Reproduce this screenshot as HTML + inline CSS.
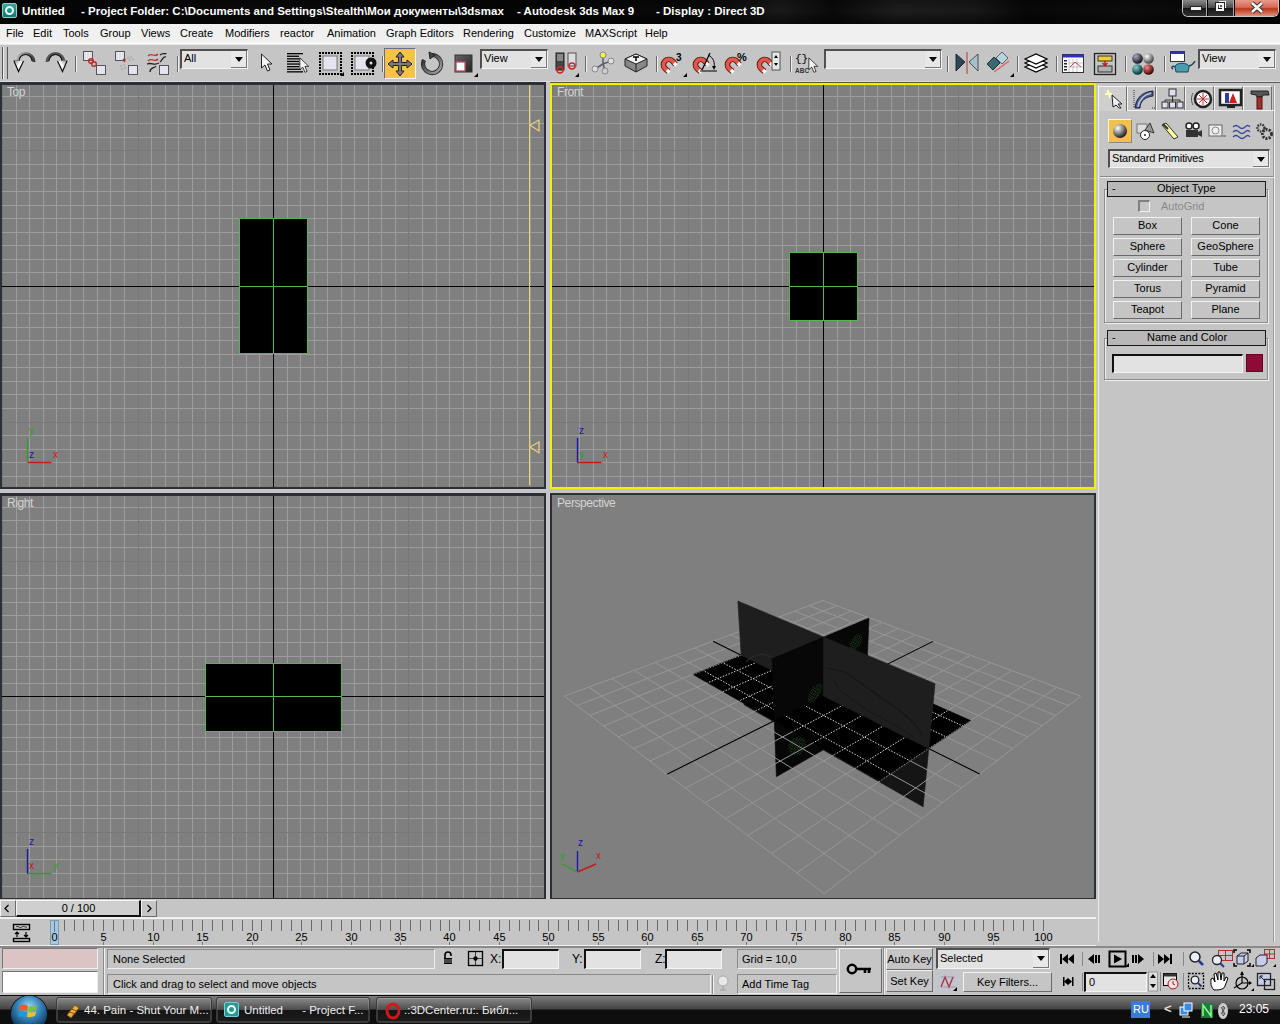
<!DOCTYPE html><html><head><meta charset="utf-8"><style>
*{margin:0;padding:0;box-sizing:border-box}
html,body{width:1280px;height:1024px;overflow:hidden;background:#c5c5c5;font-family:"Liberation Sans", sans-serif;}
.a{position:absolute}
path:not([fill]),polyline:not([fill]){fill:none}
.t{position:absolute;white-space:nowrap;font-size:11px;line-height:13px;color:#000}
.sunk{position:absolute;background:#e2e2e2;border-top:2px solid #505050;border-left:2px solid #505050;border-right:1px solid #f4f4f4;border-bottom:1px solid #f4f4f4}
.btn{position:absolute;background:#c5c5c5;border-top:1px solid #f2f2f2;border-left:1px solid #f2f2f2;border-right:1px solid #6a6a6a;border-bottom:1px solid #6a6a6a;font-size:11px;line-height:15px;text-align:center;white-space:nowrap;color:#000}
.pnl{position:absolute;background:#c5c5c5;border-top:1px solid #8a8a8a;border-left:1px solid #8a8a8a;border-right:1px solid #f0f0f0;border-bottom:1px solid #f0f0f0}
.sunkb{position:absolute;background:#e2e2e2;border-top:2px solid #111;border-left:2px solid #111;border-right:1px solid #f4f4f4;border-bottom:1px solid #f4f4f4}
.sep{position:absolute;width:2px;border-left:1px solid #8a8a8a;border-right:1px solid #f0f0f0}

</style></head><body>
<div class="a" style="left:0px;top:0px;width:1280px;height:24px;background:linear-gradient(95deg,#040404 0%,#0a0a0a 20%,#050505 40%,#0a0a0a 55%,#1a1a1a 61%,#0a0a0a 65%,#1e1e1e 70%,#191919 76%,#080808 80%,#0c0c0c 88%,#050505 100%)"></div>
<div class="a" style="left:0px;top:0px;width:1280px;height:24px;background:linear-gradient(rgba(0,0,0,.3),rgba(0,0,0,0) 45%,rgba(0,0,0,.6))"></div>
<div class="t" style="left:22px;top:4px;font-size:11.5px;font-weight:bold;color:#fff;line-height:14px">Untitled</div>
<div class="t" style="left:81px;top:4px;font-size:11.5px;font-weight:bold;color:#fff;line-height:14px">- Project Folder: C:\Documents and Settings\Stealth\Мои документы\3dsmax</div>
<div class="t" style="left:517px;top:4px;font-size:11.5px;font-weight:bold;color:#fff;line-height:14px">- Autodesk 3ds Max 9</div>
<div class="t" style="left:656px;top:4px;font-size:11.5px;font-weight:bold;color:#fff;line-height:14px">- Display : Direct 3D</div>
<div class="a" style="left:2px;top:3px;width:15px;height:15px;background:linear-gradient(#3aa89c,#17756c);border:1px solid #7fd6cc;border-radius:2px"></div>
<div class="a" style="left:5px;top:6px;width:9px;height:9px;border:2px solid #e8ffff;border-radius:50%"></div>
<div class="a" style="left:1182px;top:0px;width:97px;height:17px;border:1px solid #c8c8c8;border-top:none;border-radius:0 0 6px 6px;background:#000"></div>
<div class="a" style="left:1183px;top:0px;width:24px;height:16px;background:linear-gradient(#8a8a8a,#4a4a4a 48%,#151515 52%,#333);border-right:1px solid #aaa;border-radius:0 0 0 5px"></div>
<div class="a" style="left:1191px;top:7px;width:10px;height:3px;background:#f4f4f4;box-shadow:0 0 0 1px #222"></div>
<div class="a" style="left:1208px;top:0px;width:26px;height:16px;background:linear-gradient(#8a8a8a,#4a4a4a 48%,#151515 52%,#333);border-right:1px solid #aaa"></div>
<div class="a" style="left:1219px;top:1px;width:7px;height:7px;border:1px solid #eee"></div>
<div class="a" style="left:1216px;top:3px;width:8px;height:8px;border:2px solid #f4f4f4;box-shadow:0 0 0 1px #222"></div>
<div class="a" style="left:1235px;top:0px;width:43px;height:16px;background:linear-gradient(#e89a8a,#d86a58 45%,#b8381c 55%,#e0907e);border-radius:0 0 5px 0"></div>
<svg class="a" style="left:1249px;top:1px" width="16" height="13"><path d="M3 2 L13 11 M13 2 L3 11" stroke="#333" stroke-width="4.4"/><path d="M3 2 L13 11 M13 2 L3 11" stroke="#f4f4f4" stroke-width="2.6"/></svg>
<div class="a" style="left:0px;top:24px;width:1280px;height:18px;background:#f0f0f0"></div>
<div class="a" style="left:0px;top:42px;width:1280px;height:2px;background:#f8f8f8"></div>
<div class="t" style="left:6px;top:27px;">File</div>
<div class="t" style="left:33px;top:27px;">Edit</div>
<div class="t" style="left:63px;top:27px;">Tools</div>
<div class="t" style="left:100px;top:27px;">Group</div>
<div class="t" style="left:141px;top:27px;">Views</div>
<div class="t" style="left:180px;top:27px;">Create</div>
<div class="t" style="left:225px;top:27px;">Modifiers</div>
<div class="t" style="left:280px;top:27px;">reactor</div>
<div class="t" style="left:327px;top:27px;">Animation</div>
<div class="t" style="left:386px;top:27px;">Graph Editors</div>
<div class="t" style="left:463px;top:27px;">Rendering</div>
<div class="t" style="left:524px;top:27px;">Customize</div>
<div class="t" style="left:585px;top:27px;">MAXScript</div>
<div class="t" style="left:645px;top:27px;">Help</div>
<div class="a" style="left:0px;top:44px;width:1280px;height:37px;background:#c5c5c5;border-top:1px solid #e8e8e8"></div>
<div class="a" style="left:0px;top:81px;width:1280px;height:1px;background:#dcdce4"></div>
<div class="a" style="left:2px;top:47px;width:6px;height:32px;border-left:1px solid #555;border-right:1px solid #555;box-shadow:inset 1px 0 0 #f0f0f0"></div><svg class="a" style="left:12px;top:51px" width="25" height="22" viewBox="0 0 25 22"><defs><linearGradient id="ug" x1="0" y1="0" x2="1" y2="0"><stop offset="0" stop-color="#b8b8b8"/><stop offset=".6" stop-color="#7a7a7a"/><stop offset="1" stop-color="#2a2a2a"/></linearGradient><linearGradient id="ua" x1="0" y1="0" x2="1" y2="1"><stop offset="0" stop-color="#909090"/><stop offset=".5" stop-color="#fff"/><stop offset="1" stop-color="#bbb"/></linearGradient></defs><path d="M23.5 11 A10 10 0 0 0 3.5 11 L6.5 11 A7 7 0 0 1 20.5 11 Z" fill="url(#ug)"/><path d="M7 10 A6.5 6.5 0 0 1 20 10" stroke="#111" stroke-width="1.2" fill="none"/><path d="M1.5 9.5 L11.5 10 L6.5 20.5 Z" fill="url(#ua)"/><path d="M2 10 L6.5 20.5 L11.5 10" stroke="#111" stroke-width="1.2" fill="none"/><path d="M1.5 9.5 L6 9.7" stroke="#777" stroke-width="1"/></svg><svg class="a" style="left:44px;top:51px" width="25" height="22" viewBox="0 0 25 22"><g transform="translate(25,0) scale(-1,1)"><path d="M23.5 11 A10 10 0 0 0 3.5 11 L6.5 11 A7 7 0 0 1 20.5 11 Z" fill="#555"/><path d="M7 10 A6.5 6.5 0 0 1 20 10" stroke="#111" stroke-width="1.2" fill="none"/><path d="M1.5 9.5 L11.5 10 L6.5 20.5 Z" fill="url(#ua)"/><path d="M2 10 L6.5 20.5 L11.5 10" stroke="#111" stroke-width="1.2" fill="none"/><path d="M1.5 9.5 L6 9.7" stroke="#777" stroke-width="1"/></g></svg><div class="a" style="left:75px;top:56px;width:2px;height:16px;border-left:1px solid #6a6a6a;border-right:1px solid #f0f0f0"></div><svg class="a" style="left:82px;top:50px" width="25" height="26" viewBox="0 0 25 26"><rect x="1.5" y="1.5" width="9" height="9" fill="#e4e4f0" stroke="#555" stroke-width="1"/><rect x="14.5" y="15.5" width="9" height="9" fill="#e4e4f0" stroke="#555" stroke-width="1"/><circle cx="9" cy="11" r="2.3" fill="none" stroke="#c02828" stroke-width="1.4"/><circle cx="12" cy="14" r="2.3" fill="none" stroke="#c02828" stroke-width="1.4"/></svg><svg class="a" style="left:114px;top:50px" width="25" height="26" viewBox="0 0 25 26"><rect x="1.5" y="1.5" width="9" height="9" fill="#e4e4f0" stroke="#555" stroke-width="1"/><rect x="14.5" y="15.5" width="9" height="9" fill="#e4e4f0" stroke="#555" stroke-width="1"/><path d="M9 10 C11 8 12 10 10 12" stroke="#c02828" stroke-width="1.3" fill="none"/><g fill="#777"><circle cx="14" cy="8" r=".6"/><circle cx="17" cy="7" r=".6"/><circle cx="16" cy="10" r=".6"/><circle cx="19" cy="9" r=".6"/><circle cx="7" cy="16" r=".6"/><circle cx="10" cy="15" r=".6"/><circle cx="8" cy="19" r=".6"/><circle cx="11" cy="18" r=".6"/></g></svg><svg class="a" style="left:146px;top:50px" width="25" height="26" viewBox="0 0 25 26"><path d="M2 6 C5 2 9 8 12 4 M2 11 C5 7 9 13 12 9" stroke="#c02828" stroke-width="1.3" fill="none"/><path d="M1 14 C6 12 8 16 13 13 M14 5 C17 2 20 5 20 3 M14 12 C17 9 17 6 20 7 M4 22 C4 17 8 19 10 16" stroke="#222" stroke-width="1.3" fill="none"/><rect x="13.5" y="15.5" width="9" height="9" fill="#e4e4f0" stroke="#555" stroke-width="1"/></svg><div class="a" style="left:177px;top:56px;width:2px;height:16px;border-left:1px solid #6a6a6a;border-right:1px solid #f0f0f0"></div><div class="sunk" style="left:180px;top:49px;width:68px;height:20px"></div><div class="t" style="left:184px;top:52px">All</div><div class="a" style="left:231px;top:51px;width:16px;height:17px;background:#e8e8e8;border-right:1px solid #777;border-bottom:1px solid #777"></div><svg class="a" style="left:234px;top:56px" width="10" height="8"><path d="M1 1 L9 1 L5 6 Z" fill="#000"/></svg><svg class="a" style="left:259px;top:52px" width="16" height="22" viewBox="0 0 16 22"><path transform="translate(1.5,1) scale(1)" d="M1 1 L1 15 L4.5 12 L7 18 L9.5 17 L7 11 L11.5 11 Z" fill="#f4f4f4" stroke="#222" stroke-width="1"/></svg><svg class="a" style="left:286px;top:52px" width="24" height="23" viewBox="0 0 24 23"><g fill="#000"><rect x="1" y="1.0" width="16" height="1.3"/><rect x="1" y="3.6" width="12" height="1.3"/><rect x="1" y="6.2" width="14" height="1.3"/><rect x="1" y="8.8" width="12" height="1.3"/><rect x="1" y="11.4" width="14" height="1.3"/><rect x="1" y="14.0" width="12" height="1.3"/><rect x="1" y="16.6" width="14" height="1.3"/><rect x="1" y="19.2" width="16" height="1.3"/></g><path transform="translate(13,5) scale(0.85)" d="M1 1 L1 15 L4.5 12 L7 18 L9.5 17 L7 11 L11.5 11 Z" fill="#f4f4f4" stroke="#222" stroke-width="1"/></svg><svg class="a" style="left:318px;top:51px" width="26" height="25" viewBox="0 0 26 25"><rect x="1" y="1" width="2" height="2" fill="#000"/><rect x="1" y="22" width="2" height="2" fill="#000"/><rect x="4" y="1" width="2" height="2" fill="#000"/><rect x="4" y="22" width="2" height="2" fill="#000"/><rect x="7" y="1" width="2" height="2" fill="#000"/><rect x="7" y="22" width="2" height="2" fill="#000"/><rect x="10" y="1" width="2" height="2" fill="#000"/><rect x="10" y="22" width="2" height="2" fill="#000"/><rect x="13" y="1" width="2" height="2" fill="#000"/><rect x="13" y="22" width="2" height="2" fill="#000"/><rect x="16" y="1" width="2" height="2" fill="#000"/><rect x="16" y="22" width="2" height="2" fill="#000"/><rect x="19" y="1" width="2" height="2" fill="#000"/><rect x="19" y="22" width="2" height="2" fill="#000"/><rect x="22" y="1" width="2" height="2" fill="#000"/><rect x="22" y="22" width="2" height="2" fill="#000"/><rect x="1" y="4" width="2" height="2" fill="#000"/><rect x="22" y="4" width="2" height="2" fill="#000"/><rect x="1" y="7" width="2" height="2" fill="#000"/><rect x="22" y="7" width="2" height="2" fill="#000"/><rect x="1" y="10" width="2" height="2" fill="#000"/><rect x="22" y="10" width="2" height="2" fill="#000"/><rect x="1" y="13" width="2" height="2" fill="#000"/><rect x="22" y="13" width="2" height="2" fill="#000"/><rect x="1" y="16" width="2" height="2" fill="#000"/><rect x="22" y="16" width="2" height="2" fill="#000"/><rect x="1" y="19" width="2" height="2" fill="#000"/><rect x="22" y="19" width="2" height="2" fill="#000"/><rect x="1" y="22" width="2" height="2" fill="#000"/><rect x="22" y="22" width="2" height="2" fill="#000"/><rect x="5" y="5" width="14" height="14" fill="#e4e4ee" stroke="#777"/></svg><svg class="a" style="left:340px;top:72px" width="4" height="4"><path d="M4 0 L4 4 L0 4 Z" fill="#000"/></svg><svg class="a" style="left:350px;top:51px" width="27" height="25" viewBox="0 0 27 25"><rect x="1" y="1" width="2" height="2" fill="#000"/><rect x="1" y="22" width="2" height="2" fill="#000"/><rect x="4" y="1" width="2" height="2" fill="#000"/><rect x="4" y="22" width="2" height="2" fill="#000"/><rect x="7" y="1" width="2" height="2" fill="#000"/><rect x="7" y="22" width="2" height="2" fill="#000"/><rect x="10" y="1" width="2" height="2" fill="#000"/><rect x="10" y="22" width="2" height="2" fill="#000"/><rect x="13" y="1" width="2" height="2" fill="#000"/><rect x="13" y="22" width="2" height="2" fill="#000"/><rect x="16" y="1" width="2" height="2" fill="#000"/><rect x="16" y="22" width="2" height="2" fill="#000"/><rect x="19" y="1" width="2" height="2" fill="#000"/><rect x="19" y="22" width="2" height="2" fill="#000"/><rect x="22" y="1" width="2" height="2" fill="#000"/><rect x="22" y="22" width="2" height="2" fill="#000"/><rect x="1" y="4" width="2" height="2" fill="#000"/><rect x="22" y="4" width="2" height="2" fill="#000"/><rect x="1" y="7" width="2" height="2" fill="#000"/><rect x="22" y="7" width="2" height="2" fill="#000"/><rect x="1" y="10" width="2" height="2" fill="#000"/><rect x="22" y="10" width="2" height="2" fill="#000"/><rect x="1" y="13" width="2" height="2" fill="#000"/><rect x="22" y="13" width="2" height="2" fill="#000"/><rect x="1" y="16" width="2" height="2" fill="#000"/><rect x="22" y="16" width="2" height="2" fill="#000"/><rect x="1" y="19" width="2" height="2" fill="#000"/><rect x="22" y="19" width="2" height="2" fill="#000"/><rect x="1" y="22" width="2" height="2" fill="#000"/><rect x="22" y="22" width="2" height="2" fill="#000"/><rect x="5" y="5" width="14" height="14" fill="#e4e4ee" stroke="#777"/><circle cx="21" cy="12" r="5.5" fill="#111"/><circle cx="21" cy="12" r="1.5" fill="#ddd"/></svg><div class="a" style="left:382px;top:56px;width:2px;height:16px;border-left:1px solid #6a6a6a;border-right:1px solid #f0f0f0"></div><div class="a" style="left:384px;top:48px;width:32px;height:31px;background:#f5c446;border-top:1px solid #6a6a8a;border-left:1px solid #6a6a8a;border-right:1px solid #f8f8f8;border-bottom:1px solid #f8f8f8"></div><svg class="a" style="left:387px;top:51px" width="26" height="26" viewBox="0 0 26 26"><path d="M13 1 L17 6 L14.5 6 L14.5 11.5 L20 11.5 L20 9 L25 13 L20 17 L20 14.5 L14.5 14.5 L14.5 20 L17 20 L13 25 L9 20 L11.5 20 L11.5 14.5 L6 14.5 L6 17 L1 13 L6 9 L6 11.5 L11.5 11.5 L11.5 6 L9 6 Z" fill="#7a7a7a" stroke="#222" stroke-width="1"/></svg><svg class="a" style="left:420px;top:51px" width="25" height="25" viewBox="0 0 25 25"><defs><linearGradient id="rg" x1="0" y1="0" x2="1" y2="1"><stop offset="0" stop-color="#222"/><stop offset="1" stop-color="#aaa"/></linearGradient></defs><path d="M12 4 A9 9 0 1 1 4 9" fill="none" stroke="#222" stroke-width="4.2"/><path d="M12 4 A9 9 0 1 1 4 9" fill="none" stroke="url(#rg)" stroke-width="2.6"/><path d="M9 1 L15 4 L10 8 Z" fill="#444" stroke="#222"/></svg><svg class="a" style="left:453px;top:53px" width="22" height="22" viewBox="0 0 22 22"><defs><linearGradient id="sg" x1="0" y1="0" x2="1" y2="1"><stop offset="0" stop-color="#666"/><stop offset="1" stop-color="#222"/></linearGradient></defs><rect x="2" y="2" width="17" height="17" fill="url(#sg)" stroke="#333"/><rect x="3" y="9" width="9" height="9" fill="#fff" stroke="#c05060" stroke-width="1.3"/></svg><svg class="a" style="left:474px;top:73px" width="4" height="4"><path d="M4 0 L4 4 L0 4 Z" fill="#000"/></svg><div class="sunk" style="left:480px;top:49px;width:68px;height:20px"></div><div class="t" style="left:484px;top:52px">View</div><div class="a" style="left:531px;top:51px;width:16px;height:17px;background:#e8e8e8;border-right:1px solid #777;border-bottom:1px solid #777"></div><svg class="a" style="left:534px;top:56px" width="10" height="8"><path d="M1 1 L9 1 L5 6 Z" fill="#000"/></svg><svg class="a" style="left:554px;top:51px" width="26" height="24" viewBox="0 0 26 24"><rect x="2" y="2" width="8" height="17" fill="#444" stroke="#222"/><rect x="3" y="3" width="6" height="7" fill="#888"/><rect x="14" y="2" width="8" height="13" fill="#ddd" stroke="#555"/><circle cx="6" cy="19" r="3" fill="none" stroke="#d02828" stroke-width="1.5"/><circle cx="18" cy="15" r="3" fill="none" stroke="#d02828" stroke-width="1.5"/></svg><svg class="a" style="left:575px;top:73px" width="4" height="4"><path d="M4 0 L4 4 L0 4 Z" fill="#000"/></svg><div class="a" style="left:585px;top:56px;width:2px;height:16px;border-left:1px solid #6a6a6a;border-right:1px solid #f0f0f0"></div><svg class="a" style="left:591px;top:51px" width="24" height="24" viewBox="0 0 24 24"><path d="M12 5 L12 13 L4 18 M12 13 L20 10 M12 13 L14 20" stroke="#5a6070" stroke-width="1.6" fill="none"/><circle cx="12" cy="4" r="3" fill="#f0f050" stroke="#888"/><circle cx="4" cy="18" r="3" fill="#ddd" stroke="#888"/><circle cx="20" cy="10" r="3" fill="#ddd" stroke="#888"/><circle cx="14" cy="20" r="3" fill="#ccc" stroke="#888"/></svg><svg class="a" style="left:623px;top:51px" width="26" height="24" viewBox="0 0 26 24"><path d="M2 8 L13 3 L24 8 L24 15 L13 21 L2 15 Z" fill="#888" stroke="#222"/><path d="M2 8 L13 13 L24 8 L13 3 Z" fill="#f0f0f0" stroke="#222"/><path d="M13 13 L13 21" stroke="#222"/><path d="M10 6 L16 6 M13 6 L13 10" stroke="#000" stroke-width="1.5"/></svg><div class="a" style="left:656px;top:56px;width:2px;height:16px;border-left:1px solid #6a6a6a;border-right:1px solid #f0f0f0"></div><svg class="a" style="left:659px;top:51px" width="28" height="26" viewBox="0 0 28 26"><g transform="translate(-1,1)"><path d="M17.5 12.5 L14.5 9 A5.2 5.2 0 0 0 7 16.5 L10.5 19.5" fill="none" stroke="#5a1a14" stroke-width="5.6"/><path d="M17.5 12.5 L14.5 9 A5.2 5.2 0 0 0 7 16.5 L10.5 19.5" fill="none" stroke="#e0584a" stroke-width="3.8"/><path d="M16 11 L18.5 13.5 M9 18 L11.5 20.5" stroke="#fff" stroke-width="3.2"/></g><text x="17" y="10" font-family="Liberation Sans" font-weight="bold" font-size="10">3</text></svg><svg class="a" style="left:683px;top:73px" width="4" height="4"><path d="M4 0 L4 4 L0 4 Z" fill="#000"/></svg><svg class="a" style="left:691px;top:51px" width="28" height="26" viewBox="0 0 28 26"><g transform="translate(-1,1)"><path d="M17.5 12.5 L14.5 9 A5.2 5.2 0 0 0 7 16.5 L10.5 19.5" fill="none" stroke="#5a1a14" stroke-width="5.6"/><path d="M17.5 12.5 L14.5 9 A5.2 5.2 0 0 0 7 16.5 L10.5 19.5" fill="none" stroke="#e0584a" stroke-width="3.8"/><path d="M16 11 L18.5 13.5 M9 18 L11.5 20.5" stroke="#fff" stroke-width="3.2"/></g><path d="M9 20 L26 20 M11 19 L19 2" stroke="#000" stroke-width="1.2"/><path d="M17 4 C23 7 24 12 23 17" stroke="#000" fill="none"/><path d="M21 15 L23 19 L25 15 Z" fill="#000"/></svg><svg class="a" style="left:723px;top:51px" width="28" height="26" viewBox="0 0 28 26"><g transform="translate(-1,1)"><path d="M17.5 12.5 L14.5 9 A5.2 5.2 0 0 0 7 16.5 L10.5 19.5" fill="none" stroke="#5a1a14" stroke-width="5.6"/><path d="M17.5 12.5 L14.5 9 A5.2 5.2 0 0 0 7 16.5 L10.5 19.5" fill="none" stroke="#e0584a" stroke-width="3.8"/><path d="M16 11 L18.5 13.5 M9 18 L11.5 20.5" stroke="#fff" stroke-width="3.2"/></g><text x="14" y="10" font-family="Liberation Sans" font-weight="bold" font-size="11">%</text></svg><svg class="a" style="left:755px;top:51px" width="28" height="26" viewBox="0 0 28 26"><g transform="translate(-1,1)"><path d="M17.5 12.5 L14.5 9 A5.2 5.2 0 0 0 7 16.5 L10.5 19.5" fill="none" stroke="#5a1a14" stroke-width="5.6"/><path d="M17.5 12.5 L14.5 9 A5.2 5.2 0 0 0 7 16.5 L10.5 19.5" fill="none" stroke="#e0584a" stroke-width="3.8"/><path d="M16 11 L18.5 13.5 M9 18 L11.5 20.5" stroke="#fff" stroke-width="3.2"/></g><rect x="17" y="1" width="8" height="18" fill="#e8e8e8" stroke="#555"/><path d="M19 7 L21 4 L23 7 Z M19 12 L21 15 L23 12 Z" fill="#000"/></svg><div class="a" style="left:790px;top:56px;width:2px;height:16px;border-left:1px solid #6a6a6a;border-right:1px solid #f0f0f0"></div><svg class="a" style="left:794px;top:51px" width="28" height="26" viewBox="0 0 28 26"><text x="1" y="11" font-family="Liberation Mono" font-size="11">{}</text><text x="1" y="22" font-family="Liberation Sans" font-weight="bold" font-size="6.5" fill="#333">ABC</text><path transform="translate(14,6) scale(0.85)" d="M1 1 L1 15 L4.5 12 L7 18 L9.5 17 L7 11 L11.5 11 Z" fill="#f4f4f4" stroke="#222" stroke-width="1"/></svg><div class="sunk" style="left:824px;top:49px;width:118px;height:20px"></div><div class="a" style="left:925px;top:51px;width:16px;height:17px;background:#e8e8e8;border-right:1px solid #777;border-bottom:1px solid #777"></div><svg class="a" style="left:928px;top:56px" width="10" height="8"><path d="M1 1 L9 1 L5 6 Z" fill="#000"/></svg><div class="a" style="left:947px;top:56px;width:2px;height:16px;border-left:1px solid #6a6a6a;border-right:1px solid #f0f0f0"></div><svg class="a" style="left:954px;top:51px" width="26" height="24" viewBox="0 0 26 24"><path d="M2 3 L11 11 L2 20 Z" fill="#2a4a5a" stroke="#111" stroke-width=".8"/><path d="M24 3 L15 11 L24 20 Z" fill="#a8c0cc" stroke="#333" stroke-width=".8"/><path d="M13 1 L13 23" stroke="#c06060" stroke-width="1.5"/></svg><svg class="a" style="left:985px;top:51px" width="26" height="26" viewBox="0 0 26 26"><path d="M2 13 L9 6 L15 12 L8 19 Z" fill="#3a6a70" stroke="#111" stroke-width=".8"/><path d="M11 7 L17 1 L23 7 L17 13 Z" fill="#b8d4e0" stroke="#444" stroke-width=".8"/><path d="M9 21 L24 10" stroke="#e06060" stroke-width="1.3"/></svg><svg class="a" style="left:1010px;top:73px" width="4" height="4"><path d="M4 0 L4 4 L0 4 Z" fill="#000"/></svg><div class="a" style="left:1017px;top:56px;width:2px;height:16px;border-left:1px solid #6a6a6a;border-right:1px solid #f0f0f0"></div><svg class="a" style="left:1023px;top:53px" width="26" height="22" viewBox="0 0 26 22"><path d="M2 14 L13 9 L24 14 L13 19 Z" fill="#fff" stroke="#000" stroke-width="1.2"/><path d="M2 10 L13 5 L24 10 L13 15 Z" fill="#fff" stroke="#000" stroke-width="1.2"/><path d="M2 6 L13 1 L24 6 L13 11 Z" fill="#fff" stroke="#000" stroke-width="1.2"/></svg><div class="a" style="left:1056px;top:56px;width:2px;height:16px;border-left:1px solid #6a6a6a;border-right:1px solid #f0f0f0"></div><svg class="a" style="left:1061px;top:53px" width="25" height="22" viewBox="0 0 25 22"><rect x="1.5" y="1.5" width="21" height="18" fill="#fff" stroke="#333"/><rect x="1.5" y="1.5" width="21" height="3" fill="#3030c0"/><rect x="3" y="7" width="3" height="1.5" fill="#223"/><rect x="3" y="10" width="3" height="1.5" fill="#223"/><rect x="3" y="13" width="3" height="1.5" fill="#223"/><rect x="3" y="16" width="3" height="1.5" fill="#223"/><path d="M8 6 L8 19 M12 6 L12 19 M16 6 L16 19 M8 10 L22 10 M8 14 L22 14" stroke="#99a" stroke-width=".6"/><path d="M9 14 L14 9 L20 14" stroke="#d04040" fill="none"/></svg><svg class="a" style="left:1093px;top:52px" width="25" height="24" viewBox="0 0 25 24"><rect x="1.5" y="1.5" width="21" height="21" fill="#c5c5c5" stroke="#222" stroke-width="1.3"/><rect x="5" y="4" width="14" height="5" fill="#f0d030" stroke="#333"/><rect x="5" y="14" width="14" height="6" fill="#b0b0b0" stroke="#333"/><path d="M12 9 L12 13 M9.5 11 L12 13.5 L14.5 11" stroke="#c02020" stroke-width="1.5" fill="none"/></svg><div class="a" style="left:1125px;top:56px;width:2px;height:16px;border-left:1px solid #6a6a6a;border-right:1px solid #f0f0f0"></div><svg class="a" style="left:1131px;top:52px" width="25" height="24" viewBox="0 0 25 24"><defs><radialGradient id="m1" cx="35%" cy="30%" r="70%"><stop offset="0" stop-color="#aab"/><stop offset="1" stop-color="#112"/></radialGradient><radialGradient id="m2" cx="35%" cy="30%" r="70%"><stop offset="0" stop-color="#fff"/><stop offset="1" stop-color="#444"/></radialGradient><radialGradient id="m3" cx="35%" cy="30%" r="70%"><stop offset="0" stop-color="#8cc"/><stop offset="1" stop-color="#033"/></radialGradient><radialGradient id="m4" cx="35%" cy="30%" r="70%"><stop offset="0" stop-color="#e88"/><stop offset="1" stop-color="#400"/></radialGradient></defs><circle cx="6.5" cy="6.5" r="5.3" fill="url(#m1)"/><circle cx="17.5" cy="6.5" r="5.3" fill="url(#m2)"/><circle cx="6.5" cy="17.5" r="5.3" fill="url(#m3)"/><circle cx="17.5" cy="17.5" r="5.3" fill="url(#m4)"/></svg><div class="a" style="left:1164px;top:56px;width:2px;height:16px;border-left:1px solid #6a6a6a;border-right:1px solid #f0f0f0"></div><svg class="a" style="left:1169px;top:50px" width="27" height="26" viewBox="0 0 27 26"><rect x="1.5" y="1.5" width="14" height="10" fill="#fff" stroke="#333"/><rect x="1.5" y="1.5" width="14" height="2.5" fill="#3030c0"/><path d="M6 17 C6 12 20 12 20 17 L19 22 L7 22 Z" fill="#4a9ab0" stroke="#1a4a5a"/><path d="M20 16 C24 15 25 13 26 11" stroke="#1a4a5a" fill="none" stroke-width="1.5"/><path d="M6 17 C3 15 2 18 4 19" stroke="#1a4a5a" fill="none" stroke-width="1.5"/></svg><div class="sunk" style="left:1198px;top:49px;width:78px;height:20px"></div><div class="t" style="left:1202px;top:52px">View</div><div class="a" style="left:1259px;top:51px;width:16px;height:17px;background:#e8e8e8;border-right:1px solid #777;border-bottom:1px solid #777"></div><svg class="a" style="left:1262px;top:56px" width="10" height="8"><path d="M1 1 L9 1 L5 6 Z" fill="#000"/></svg>
<div class="a" style="left:0px;top:82px;width:546px;height:407px;background:#2b2f36"></div>
<svg class="a" style="left:2px;top:85px" width="542" height="402" viewBox="0 0 542 402" shape-rendering="crispEdges"><rect width="542" height="402" fill="#7f7f7f"/><rect x="0" y="0" width="1" height="402" fill="#787878"/><rect x="14" y="0" width="1" height="402" fill="#9c9c9c"/><rect x="27" y="0" width="1" height="402" fill="#9c9c9c"/><rect x="41" y="0" width="1" height="402" fill="#9c9c9c"/><rect x="54" y="0" width="1" height="402" fill="#9c9c9c"/><rect x="68" y="0" width="1" height="402" fill="#9c9c9c"/><rect x="81" y="0" width="1" height="402" fill="#9c9c9c"/><rect x="0" y="11" width="542" height="1" fill="#9c9c9c"/><rect x="95" y="0" width="1" height="402" fill="#9c9c9c"/><rect x="0" y="25" width="542" height="1" fill="#9c9c9c"/><rect x="108" y="0" width="1" height="402" fill="#9c9c9c"/><rect x="0" y="38" width="542" height="1" fill="#9c9c9c"/><rect x="122" y="0" width="1" height="402" fill="#9c9c9c"/><rect x="0" y="52" width="542" height="1" fill="#9c9c9c"/><rect x="136" y="0" width="1" height="402" fill="#787878"/><rect x="0" y="65" width="542" height="1" fill="#787878"/><rect x="149" y="0" width="1" height="402" fill="#9c9c9c"/><rect x="0" y="79" width="542" height="1" fill="#9c9c9c"/><rect x="163" y="0" width="1" height="402" fill="#9c9c9c"/><rect x="0" y="93" width="542" height="1" fill="#9c9c9c"/><rect x="176" y="0" width="1" height="402" fill="#9c9c9c"/><rect x="0" y="106" width="542" height="1" fill="#9c9c9c"/><rect x="190" y="0" width="1" height="402" fill="#9c9c9c"/><rect x="0" y="120" width="542" height="1" fill="#9c9c9c"/><rect x="203" y="0" width="1" height="402" fill="#9c9c9c"/><rect x="0" y="133" width="542" height="1" fill="#9c9c9c"/><rect x="217" y="0" width="1" height="402" fill="#9c9c9c"/><rect x="0" y="147" width="542" height="1" fill="#9c9c9c"/><rect x="230" y="0" width="1" height="402" fill="#9c9c9c"/><rect x="0" y="160" width="542" height="1" fill="#9c9c9c"/><rect x="244" y="0" width="1" height="402" fill="#9c9c9c"/><rect x="0" y="174" width="542" height="1" fill="#9c9c9c"/><rect x="257" y="0" width="1" height="402" fill="#9c9c9c"/><rect x="0" y="187" width="542" height="1" fill="#9c9c9c"/><rect x="285" y="0" width="1" height="402" fill="#9c9c9c"/><rect x="0" y="215" width="542" height="1" fill="#9c9c9c"/><rect x="298" y="0" width="1" height="402" fill="#9c9c9c"/><rect x="0" y="228" width="542" height="1" fill="#9c9c9c"/><rect x="312" y="0" width="1" height="402" fill="#9c9c9c"/><rect x="0" y="242" width="542" height="1" fill="#9c9c9c"/><rect x="325" y="0" width="1" height="402" fill="#9c9c9c"/><rect x="0" y="255" width="542" height="1" fill="#9c9c9c"/><rect x="339" y="0" width="1" height="402" fill="#9c9c9c"/><rect x="0" y="269" width="542" height="1" fill="#9c9c9c"/><rect x="352" y="0" width="1" height="402" fill="#9c9c9c"/><rect x="0" y="282" width="542" height="1" fill="#9c9c9c"/><rect x="366" y="0" width="1" height="402" fill="#9c9c9c"/><rect x="0" y="296" width="542" height="1" fill="#9c9c9c"/><rect x="379" y="0" width="1" height="402" fill="#9c9c9c"/><rect x="0" y="309" width="542" height="1" fill="#9c9c9c"/><rect x="393" y="0" width="1" height="402" fill="#9c9c9c"/><rect x="0" y="323" width="542" height="1" fill="#9c9c9c"/><rect x="406" y="0" width="1" height="402" fill="#787878"/><rect x="0" y="337" width="542" height="1" fill="#787878"/><rect x="420" y="0" width="1" height="402" fill="#9c9c9c"/><rect x="0" y="350" width="542" height="1" fill="#9c9c9c"/><rect x="434" y="0" width="1" height="402" fill="#9c9c9c"/><rect x="0" y="364" width="542" height="1" fill="#9c9c9c"/><rect x="447" y="0" width="1" height="402" fill="#9c9c9c"/><rect x="0" y="377" width="542" height="1" fill="#9c9c9c"/><rect x="461" y="0" width="1" height="402" fill="#9c9c9c"/><rect x="0" y="391" width="542" height="1" fill="#9c9c9c"/><rect x="474" y="0" width="1" height="402" fill="#9c9c9c"/><rect x="488" y="0" width="1" height="402" fill="#9c9c9c"/><rect x="501" y="0" width="1" height="402" fill="#9c9c9c"/><rect x="515" y="0" width="1" height="402" fill="#9c9c9c"/><rect x="528" y="0" width="1" height="402" fill="#9c9c9c"/><rect x="271" y="0" width="1" height="402" fill="#000"/><rect x="0" y="201" width="542" height="1" fill="#000"/><rect x="237" y="133" width="69" height="136" fill="#50b84c"/><rect x="238" y="134" width="67" height="134" fill="#000"/><rect x="271" y="133" width="1" height="136" fill="#50b84c"/><rect x="237" y="201" width="69" height="1" fill="#50b84c"/></svg>
<div class="t" style="left:7px;top:86px;color:#d4d4d4;font-size:12px;letter-spacing:-0.4px">Top</div>
<div class="a" style="left:550px;top:82px;width:546px;height:407px;background:#2b2f36"></div>
<svg class="a" style="left:552px;top:85px" width="542" height="402" viewBox="0 0 542 402" shape-rendering="crispEdges"><rect width="542" height="402" fill="#7f7f7f"/><rect x="0" y="0" width="1" height="402" fill="#787878"/><rect x="14" y="0" width="1" height="402" fill="#9c9c9c"/><rect x="27" y="0" width="1" height="402" fill="#9c9c9c"/><rect x="41" y="0" width="1" height="402" fill="#9c9c9c"/><rect x="54" y="0" width="1" height="402" fill="#9c9c9c"/><rect x="68" y="0" width="1" height="402" fill="#9c9c9c"/><rect x="81" y="0" width="1" height="402" fill="#9c9c9c"/><rect x="0" y="11" width="542" height="1" fill="#9c9c9c"/><rect x="95" y="0" width="1" height="402" fill="#9c9c9c"/><rect x="0" y="25" width="542" height="1" fill="#9c9c9c"/><rect x="108" y="0" width="1" height="402" fill="#9c9c9c"/><rect x="0" y="38" width="542" height="1" fill="#9c9c9c"/><rect x="122" y="0" width="1" height="402" fill="#9c9c9c"/><rect x="0" y="52" width="542" height="1" fill="#9c9c9c"/><rect x="136" y="0" width="1" height="402" fill="#787878"/><rect x="0" y="65" width="542" height="1" fill="#787878"/><rect x="149" y="0" width="1" height="402" fill="#9c9c9c"/><rect x="0" y="79" width="542" height="1" fill="#9c9c9c"/><rect x="163" y="0" width="1" height="402" fill="#9c9c9c"/><rect x="0" y="93" width="542" height="1" fill="#9c9c9c"/><rect x="176" y="0" width="1" height="402" fill="#9c9c9c"/><rect x="0" y="106" width="542" height="1" fill="#9c9c9c"/><rect x="190" y="0" width="1" height="402" fill="#9c9c9c"/><rect x="0" y="120" width="542" height="1" fill="#9c9c9c"/><rect x="203" y="0" width="1" height="402" fill="#9c9c9c"/><rect x="0" y="133" width="542" height="1" fill="#9c9c9c"/><rect x="217" y="0" width="1" height="402" fill="#9c9c9c"/><rect x="0" y="147" width="542" height="1" fill="#9c9c9c"/><rect x="230" y="0" width="1" height="402" fill="#9c9c9c"/><rect x="0" y="160" width="542" height="1" fill="#9c9c9c"/><rect x="244" y="0" width="1" height="402" fill="#9c9c9c"/><rect x="0" y="174" width="542" height="1" fill="#9c9c9c"/><rect x="257" y="0" width="1" height="402" fill="#9c9c9c"/><rect x="0" y="187" width="542" height="1" fill="#9c9c9c"/><rect x="285" y="0" width="1" height="402" fill="#9c9c9c"/><rect x="0" y="215" width="542" height="1" fill="#9c9c9c"/><rect x="298" y="0" width="1" height="402" fill="#9c9c9c"/><rect x="0" y="228" width="542" height="1" fill="#9c9c9c"/><rect x="312" y="0" width="1" height="402" fill="#9c9c9c"/><rect x="0" y="242" width="542" height="1" fill="#9c9c9c"/><rect x="325" y="0" width="1" height="402" fill="#9c9c9c"/><rect x="0" y="255" width="542" height="1" fill="#9c9c9c"/><rect x="339" y="0" width="1" height="402" fill="#9c9c9c"/><rect x="0" y="269" width="542" height="1" fill="#9c9c9c"/><rect x="352" y="0" width="1" height="402" fill="#9c9c9c"/><rect x="0" y="282" width="542" height="1" fill="#9c9c9c"/><rect x="366" y="0" width="1" height="402" fill="#9c9c9c"/><rect x="0" y="296" width="542" height="1" fill="#9c9c9c"/><rect x="379" y="0" width="1" height="402" fill="#9c9c9c"/><rect x="0" y="309" width="542" height="1" fill="#9c9c9c"/><rect x="393" y="0" width="1" height="402" fill="#9c9c9c"/><rect x="0" y="323" width="542" height="1" fill="#9c9c9c"/><rect x="406" y="0" width="1" height="402" fill="#787878"/><rect x="0" y="337" width="542" height="1" fill="#787878"/><rect x="420" y="0" width="1" height="402" fill="#9c9c9c"/><rect x="0" y="350" width="542" height="1" fill="#9c9c9c"/><rect x="434" y="0" width="1" height="402" fill="#9c9c9c"/><rect x="0" y="364" width="542" height="1" fill="#9c9c9c"/><rect x="447" y="0" width="1" height="402" fill="#9c9c9c"/><rect x="0" y="377" width="542" height="1" fill="#9c9c9c"/><rect x="461" y="0" width="1" height="402" fill="#9c9c9c"/><rect x="0" y="391" width="542" height="1" fill="#9c9c9c"/><rect x="474" y="0" width="1" height="402" fill="#9c9c9c"/><rect x="488" y="0" width="1" height="402" fill="#9c9c9c"/><rect x="501" y="0" width="1" height="402" fill="#9c9c9c"/><rect x="515" y="0" width="1" height="402" fill="#9c9c9c"/><rect x="528" y="0" width="1" height="402" fill="#9c9c9c"/><rect x="271" y="0" width="1" height="402" fill="#000"/><rect x="0" y="201" width="542" height="1" fill="#000"/><rect x="237" y="167" width="69" height="69" fill="#50b84c"/><rect x="238" y="168" width="67" height="67" fill="#000"/><rect x="271" y="167" width="1" height="69" fill="#50b84c"/><rect x="237" y="201" width="69" height="1" fill="#50b84c"/></svg>
<div class="t" style="left:557px;top:86px;color:#d4d4d4;font-size:12px;letter-spacing:-0.4px">Front</div>
<div class="a" style="left:0px;top:493px;width:546px;height:407px;background:#2b2f36"></div>
<svg class="a" style="left:2px;top:496px" width="542" height="402" viewBox="0 0 542 402" shape-rendering="crispEdges"><rect width="542" height="402" fill="#7f7f7f"/><rect x="0" y="0" width="1" height="402" fill="#787878"/><rect x="14" y="0" width="1" height="402" fill="#9c9c9c"/><rect x="27" y="0" width="1" height="402" fill="#9c9c9c"/><rect x="41" y="0" width="1" height="402" fill="#9c9c9c"/><rect x="54" y="0" width="1" height="402" fill="#9c9c9c"/><rect x="68" y="0" width="1" height="402" fill="#9c9c9c"/><rect x="81" y="0" width="1" height="402" fill="#9c9c9c"/><rect x="0" y="11" width="542" height="1" fill="#9c9c9c"/><rect x="95" y="0" width="1" height="402" fill="#9c9c9c"/><rect x="0" y="24" width="542" height="1" fill="#9c9c9c"/><rect x="108" y="0" width="1" height="402" fill="#9c9c9c"/><rect x="0" y="38" width="542" height="1" fill="#9c9c9c"/><rect x="122" y="0" width="1" height="402" fill="#9c9c9c"/><rect x="0" y="51" width="542" height="1" fill="#9c9c9c"/><rect x="136" y="0" width="1" height="402" fill="#787878"/><rect x="0" y="65" width="542" height="1" fill="#787878"/><rect x="149" y="0" width="1" height="402" fill="#9c9c9c"/><rect x="0" y="79" width="542" height="1" fill="#9c9c9c"/><rect x="163" y="0" width="1" height="402" fill="#9c9c9c"/><rect x="0" y="92" width="542" height="1" fill="#9c9c9c"/><rect x="176" y="0" width="1" height="402" fill="#9c9c9c"/><rect x="0" y="106" width="542" height="1" fill="#9c9c9c"/><rect x="190" y="0" width="1" height="402" fill="#9c9c9c"/><rect x="0" y="119" width="542" height="1" fill="#9c9c9c"/><rect x="203" y="0" width="1" height="402" fill="#9c9c9c"/><rect x="0" y="133" width="542" height="1" fill="#9c9c9c"/><rect x="217" y="0" width="1" height="402" fill="#9c9c9c"/><rect x="0" y="146" width="542" height="1" fill="#9c9c9c"/><rect x="230" y="0" width="1" height="402" fill="#9c9c9c"/><rect x="0" y="160" width="542" height="1" fill="#9c9c9c"/><rect x="244" y="0" width="1" height="402" fill="#9c9c9c"/><rect x="0" y="173" width="542" height="1" fill="#9c9c9c"/><rect x="257" y="0" width="1" height="402" fill="#9c9c9c"/><rect x="0" y="187" width="542" height="1" fill="#9c9c9c"/><rect x="285" y="0" width="1" height="402" fill="#9c9c9c"/><rect x="0" y="214" width="542" height="1" fill="#9c9c9c"/><rect x="298" y="0" width="1" height="402" fill="#9c9c9c"/><rect x="0" y="228" width="542" height="1" fill="#9c9c9c"/><rect x="312" y="0" width="1" height="402" fill="#9c9c9c"/><rect x="0" y="241" width="542" height="1" fill="#9c9c9c"/><rect x="325" y="0" width="1" height="402" fill="#9c9c9c"/><rect x="0" y="255" width="542" height="1" fill="#9c9c9c"/><rect x="339" y="0" width="1" height="402" fill="#9c9c9c"/><rect x="0" y="268" width="542" height="1" fill="#9c9c9c"/><rect x="352" y="0" width="1" height="402" fill="#9c9c9c"/><rect x="0" y="282" width="542" height="1" fill="#9c9c9c"/><rect x="366" y="0" width="1" height="402" fill="#9c9c9c"/><rect x="0" y="295" width="542" height="1" fill="#9c9c9c"/><rect x="379" y="0" width="1" height="402" fill="#9c9c9c"/><rect x="0" y="309" width="542" height="1" fill="#9c9c9c"/><rect x="393" y="0" width="1" height="402" fill="#9c9c9c"/><rect x="0" y="322" width="542" height="1" fill="#9c9c9c"/><rect x="406" y="0" width="1" height="402" fill="#787878"/><rect x="0" y="336" width="542" height="1" fill="#787878"/><rect x="420" y="0" width="1" height="402" fill="#9c9c9c"/><rect x="0" y="350" width="542" height="1" fill="#9c9c9c"/><rect x="434" y="0" width="1" height="402" fill="#9c9c9c"/><rect x="0" y="363" width="542" height="1" fill="#9c9c9c"/><rect x="447" y="0" width="1" height="402" fill="#9c9c9c"/><rect x="0" y="377" width="542" height="1" fill="#9c9c9c"/><rect x="461" y="0" width="1" height="402" fill="#9c9c9c"/><rect x="0" y="390" width="542" height="1" fill="#9c9c9c"/><rect x="474" y="0" width="1" height="402" fill="#9c9c9c"/><rect x="488" y="0" width="1" height="402" fill="#9c9c9c"/><rect x="501" y="0" width="1" height="402" fill="#9c9c9c"/><rect x="515" y="0" width="1" height="402" fill="#9c9c9c"/><rect x="528" y="0" width="1" height="402" fill="#9c9c9c"/><rect x="271" y="0" width="1" height="402" fill="#000"/><rect x="0" y="200" width="542" height="1" fill="#000"/><rect x="203" y="167" width="137" height="69" fill="#50b84c"/><rect x="204" y="168" width="135" height="67" fill="#000"/><rect x="271" y="167" width="1" height="69" fill="#50b84c"/><rect x="203" y="200" width="137" height="1" fill="#50b84c"/></svg>
<div class="t" style="left:7px;top:497px;color:#d4d4d4;font-size:12px;letter-spacing:-0.4px">Right</div>
<div class="a" style="left:550px;top:83px;width:546px;height:406px;border:2px solid #f4f000;border-top:2px solid #f4f000"></div>
<div class="a" style="left:550px;top:82px;width:546px;height:1px;background:#5a5a20"></div>
<svg class="a" style="left:526px;top:85px" width="18" height="400" viewBox="0 0 18 400" ><rect x="3" y="0" width="1" height="400" fill="#e8d27a"/><path d="M4 40 L13 35 L13 46 Z" fill="none" stroke="#e8d27a" stroke-width="1.2"/><path d="M4 362 L13 357 L13 368 Z" fill="none" stroke="#e8d27a" stroke-width="1.2"/></svg>
<svg class="a" style="left:23px;top:428px" width="40" height="40" viewBox="0 0 40 40" ><line x1="4.5" y1="34.5" x2="28.5" y2="34.5" stroke="#c81818" stroke-width="1.4"/><line x1="4.5" y1="34.5" x2="4.5" y2="10" stroke="#2ea02a" stroke-width="1.4"/></svg>
<div class="t" style="left:53px;top:450px;color:#c81818;font-size:10px;line-height:10px">x</div>
<div class="t" style="left:29px;top:426px;color:#2ea02a;font-size:10px;line-height:10px">y</div>
<div class="t" style="left:29px;top:450px;color:#1a1aa8;font-size:10px;line-height:10px">z</div>
<svg class="a" style="left:573px;top:428px" width="40" height="40" viewBox="0 0 40 40" ><line x1="4.5" y1="34.5" x2="28.5" y2="34.5" stroke="#c81818" stroke-width="1.4"/><line x1="4.5" y1="34.5" x2="4.5" y2="10" stroke="#1a1aa8" stroke-width="1.4"/></svg>
<div class="t" style="left:603px;top:450px;color:#c81818;font-size:10px;line-height:10px">x</div>
<div class="t" style="left:579px;top:426px;color:#1a1aa8;font-size:10px;line-height:10px">z</div>
<div class="t" style="left:579px;top:450px;color:#2ea02a;font-size:10px;line-height:10px">y</div>
<svg class="a" style="left:23px;top:839px" width="40" height="40" viewBox="0 0 40 40" ><line x1="4.5" y1="34.5" x2="28.5" y2="34.5" stroke="#2ea02a" stroke-width="1.4"/><line x1="4.5" y1="34.5" x2="4.5" y2="10" stroke="#1a1aa8" stroke-width="1.4"/></svg>
<div class="t" style="left:53px;top:861px;color:#2ea02a;font-size:10px;line-height:10px">y</div>
<div class="t" style="left:29px;top:837px;color:#1a1aa8;font-size:10px;line-height:10px">z</div>
<div class="t" style="left:29px;top:861px;color:#c81818;font-size:10px;line-height:10px">x</div>
<div class="a" style="left:550px;top:493px;width:546px;height:407px;background:#2b2f36"></div>
<svg class="a" style="left:552px;top:495px" width="542" height="403" viewBox="0 0 542 403" ><rect width="542" height="403" fill="#7f7f7f"/><polygon points="271.16,254.88 192.23,209.90 189.16,160.16 271.41,201.12" fill="#151515" stroke="#151515" stroke-width="0.6"/><polygon points="271.16,254.88 312.64,231.12 314.71,179.49 271.41,201.12" fill="#070707" stroke="#070707" stroke-width="0.6"/><polygon points="224.38,281.66 271.16,254.88 271.41,201.12 222.32,225.65" fill="#070707" stroke="#070707" stroke-width="0.6"/><polygon points="371.13,311.85 271.16,254.88 271.41,201.12 376.76,253.59" fill="#151515" stroke="#151515" stroke-width="0.6"/><g stroke="#969696" stroke-width="1"><line x1="272.16" y1="398.63" x2="12.43" y2="201.09"/><line x1="272.16" y1="398.63" x2="528.77" y2="201.16"/><line x1="299.32" y1="377.73" x2="36.80" y2="192.09"/><line x1="244.83" y1="377.84" x2="504.63" y2="192.21"/><line x1="324.53" y1="358.33" x2="59.99" y2="183.52"/><line x1="219.42" y1="358.51" x2="481.61" y2="183.67"/><line x1="348.01" y1="340.26" x2="82.11" y2="175.36"/><line x1="195.73" y1="340.50" x2="459.65" y2="175.53"/><line x1="369.92" y1="323.40" x2="103.21" y2="167.57"/><line x1="173.60" y1="323.67" x2="438.67" y2="167.75"/><line x1="390.42" y1="307.63" x2="123.37" y2="160.12"/><line x1="152.87" y1="307.90" x2="418.61" y2="160.31"/><line x1="409.63" y1="292.84" x2="142.65" y2="153.00"/><line x1="133.42" y1="293.11" x2="399.41" y2="153.19"/><line x1="444.68" y1="265.88" x2="178.78" y2="139.66"/><line x1="97.91" y1="266.10" x2="363.37" y2="139.82"/><line x1="460.69" y1="253.55" x2="195.74" y2="133.40"/><line x1="81.65" y1="253.74" x2="346.43" y2="133.54"/><line x1="475.82" y1="241.91" x2="212.01" y2="127.39"/><line x1="66.29" y1="242.05" x2="330.17" y2="127.51"/><line x1="490.13" y1="230.89" x2="227.64" y2="121.62"/><line x1="51.75" y1="230.99" x2="314.53" y2="121.71"/><line x1="503.69" y1="220.46" x2="242.67" y2="116.07"/><line x1="37.96" y1="220.51" x2="299.48" y2="116.14"/><line x1="516.55" y1="210.56" x2="257.13" y2="110.73"/><line x1="24.87" y1="210.55" x2="285.00" y2="110.76"/><line x1="528.77" y1="201.16" x2="271.05" y2="105.59"/><line x1="12.43" y1="201.09" x2="271.05" y2="105.59"/></g><line x1="115.13" y1="279.20" x2="381.01" y2="146.37" stroke="#000" stroke-width="1.1"/><line x1="427.69" y1="278.95" x2="161.10" y2="146.19" stroke="#000" stroke-width="1.1"/><polygon points="328.36,285.87 418.71,225.62 232.31,142.94 140.91,179.42" fill="#000" stroke="#000" stroke-width="0.6"/><clipPath id="gclip"><polygon points="328.36,285.87 418.71,225.62 232.31,142.94 140.91,179.42" fill="#fff" /></clipPath><g stroke="#d8d8d8" stroke-width="1" stroke-dasharray="1.5 1.5" clip-path="url(#gclip)"><line x1="272.16" y1="398.63" x2="12.43" y2="201.09"/><line x1="272.16" y1="398.63" x2="528.77" y2="201.16"/><line x1="299.32" y1="377.73" x2="36.80" y2="192.09"/><line x1="244.83" y1="377.84" x2="504.63" y2="192.21"/><line x1="324.53" y1="358.33" x2="59.99" y2="183.52"/><line x1="219.42" y1="358.51" x2="481.61" y2="183.67"/><line x1="348.01" y1="340.26" x2="82.11" y2="175.36"/><line x1="195.73" y1="340.50" x2="459.65" y2="175.53"/><line x1="369.92" y1="323.40" x2="103.21" y2="167.57"/><line x1="173.60" y1="323.67" x2="438.67" y2="167.75"/><line x1="390.42" y1="307.63" x2="123.37" y2="160.12"/><line x1="152.87" y1="307.90" x2="418.61" y2="160.31"/><line x1="409.63" y1="292.84" x2="142.65" y2="153.00"/><line x1="133.42" y1="293.11" x2="399.41" y2="153.19"/><line x1="444.68" y1="265.88" x2="178.78" y2="139.66"/><line x1="97.91" y1="266.10" x2="363.37" y2="139.82"/><line x1="460.69" y1="253.55" x2="195.74" y2="133.40"/><line x1="81.65" y1="253.74" x2="346.43" y2="133.54"/><line x1="475.82" y1="241.91" x2="212.01" y2="127.39"/><line x1="66.29" y1="242.05" x2="330.17" y2="127.51"/><line x1="490.13" y1="230.89" x2="227.64" y2="121.62"/><line x1="51.75" y1="230.99" x2="314.53" y2="121.71"/><line x1="503.69" y1="220.46" x2="242.67" y2="116.07"/><line x1="37.96" y1="220.51" x2="299.48" y2="116.14"/><line x1="516.55" y1="210.56" x2="257.13" y2="110.73"/><line x1="24.87" y1="210.55" x2="285.00" y2="110.76"/><line x1="528.77" y1="201.16" x2="271.05" y2="105.59"/><line x1="12.43" y1="201.09" x2="271.05" y2="105.59"/></g><polygon points="271.41,201.12 189.16,160.16 185.83,106.10 271.69,142.09" fill="#1e1e1e" stroke="#1e1e1e" stroke-width="0.6"/><polygon points="271.41,201.12 314.71,179.49 316.97,123.10 271.69,142.09" fill="#070707" stroke="#070707" stroke-width="0.6"/><polygon points="222.32,225.65 271.41,201.12 271.69,142.09 220.03,163.75" fill="#070707" stroke="#070707" stroke-width="0.6"/><polygon points="376.76,253.59 271.41,201.12 271.69,142.09 383.03,188.75" fill="#1e1e1e" stroke="#1e1e1e" stroke-width="0.6"/><polyline points="274.0,173.0 293.0,177.0 310.0,189.0 328.0,202.0 346.0,214.0 363.0,229.0 370.0,240.0" fill="none" stroke="#151515" stroke-width="1.2"/><polyline points="278.0,181.0 288.0,195.0 298.0,203.0 318.0,217.0 343.0,230.0 363.0,243.0" fill="none" stroke="#161616" stroke-width="1"/><path d="M194 167 Q206 155 220 162" fill="none" stroke="#2a2a2a" stroke-width="1.2"/><defs><pattern id="gd" width="2" height="2" patternUnits="userSpaceOnUse"><rect width="1" height="1" fill="#3a9a3a"/></pattern></defs><ellipse cx="304" cy="147" rx="5" ry="9" transform="rotate(30 304 147)" fill="url(#gd)" opacity=".5"/><ellipse cx="263" cy="198" rx="5" ry="11" transform="rotate(35 263 198)" fill="url(#gd)" opacity=".5"/><ellipse cx="245" cy="251" rx="8" ry="10" transform="rotate(40 245 251)" fill="url(#gd)" opacity=".5"/></svg>
<div class="t" style="left:557px;top:497px;color:#d4d4d4;font-size:12px;letter-spacing:-0.4px">Perspective</div>
<svg class="a" style="left:560px;top:836px" width="50" height="45" viewBox="0 0 50 45" ><line x1="17.5" y1="36" x2="17.5" y2="15" stroke="#1a1aa8" stroke-width="1.4"/><line x1="17.5" y1="36" x2="36" y2="28" stroke="#c81818" stroke-width="1.4"/><line x1="17.5" y1="36" x2="2" y2="28" stroke="#2ea02a" stroke-width="1.4"/></svg>
<div class="t" style="left:578px;top:838px;color:#1a1aa8;font-size:10px;line-height:10px">z</div>
<div class="t" style="left:596px;top:851px;color:#c81818;font-size:10px;line-height:10px">x</div>
<div class="t" style="left:560px;top:851px;color:#2ea02a;font-size:10px;line-height:10px">y</div>
<div class="a" style="left:1096px;top:82px;width:184px;height:861px;background:#c5c5c5"></div>
<div class="a" style="left:1096px;top:82px;width:184px;height:1px;background:#5a5a5a"></div>
<div class="a" style="left:1098px;top:85px;width:1px;height:857px;background:#ececec"></div>
<div class="a" style="left:1274px;top:85px;width:1px;height:857px;background:#ececec"></div>
<div class="a" style="left:1273px;top:85px;width:1px;height:857px;background:#9a9a9a"></div>
<div class="a" style="left:1098px;top:86px;width:29px;height:25px;border-top:1px solid #f4f4f4;border-left:1px solid #f4f4f4;border-right:1px solid #707070;background:#cfcfcf"></div>
<div class="a" style="left:1127px;top:86px;width:29px;height:25px;border-top:1px solid #f4f4f4;border-left:1px solid #f4f4f4;border-right:1px solid #707070;background:#c5c5c5"></div>
<div class="a" style="left:1156px;top:86px;width:29px;height:25px;border-top:1px solid #f4f4f4;border-left:1px solid #f4f4f4;border-right:1px solid #707070;background:#c5c5c5"></div>
<div class="a" style="left:1185px;top:86px;width:29px;height:25px;border-top:1px solid #f4f4f4;border-left:1px solid #f4f4f4;border-right:1px solid #707070;background:#c5c5c5"></div>
<div class="a" style="left:1214px;top:86px;width:29px;height:25px;border-top:1px solid #f4f4f4;border-left:1px solid #f4f4f4;border-right:1px solid #707070;background:#c5c5c5"></div>
<div class="a" style="left:1243px;top:86px;width:29px;height:25px;border-top:1px solid #f4f4f4;border-left:1px solid #f4f4f4;border-right:1px solid #707070;background:#c5c5c5"></div>
<div class="a" style="left:1127px;top:110px;width:147px;height:1px;background:#f4f4f4"></div>
<svg class="a" style="left:1104px;top:89px" width="22" height="20"><path d="M3 2 L7 7 M1 5 L8 5 M4 1 L6 9" stroke="#fff8c0" stroke-width="2"/><path d="M8 6 L18 15 L14 15 L17 19 L15 19 L12 16 L9 18 Z" fill="#f0f0f0" stroke="#222" stroke-width="1"/></svg><svg class="a" style="left:1132px;top:88px" width="24" height="22"><path d="M3 20 C4 10 10 4 21 3 L21 8 C13 9 8 13 8 20 Z" fill="#4a5a8a" stroke="#1a2040" stroke-width="1"/><path d="M6 19 C7 12 11 7 19 5" stroke="#c0c8e0" stroke-width="1.5" fill="none"/><path d="M2 2 L2 20 M20 20 L23 20" stroke="#333" stroke-dasharray="1 1"/></svg><svg class="a" style="left:1161px;top:88px" width="24" height="22"><rect x="8" y="1" width="7" height="7" fill="#dde" stroke="#333"/><path d="M11.5 8 L11.5 12 M4 12 L19 12 M4 12 L4 14 M11.5 12 L11.5 14 M19 12 L19 14" stroke="#333"/><rect x="1" y="14" width="6" height="6" fill="#dde" stroke="#333"/><rect x="8.5" y="14" width="6" height="6" fill="#dde" stroke="#333"/><rect x="16" y="14" width="6" height="6" fill="#dde" stroke="#333"/></svg><svg class="a" style="left:1190px;top:88px" width="24" height="22"><circle cx="13" cy="11" r="8" fill="#fff" stroke="#222" stroke-width="2.5"/><path d="M13 5 L13 17 M7 11 L19 11 M9 7 L17 15 M17 7 L9 15" stroke="#c03030" stroke-width="1"/><path d="M3 5 C1 9 1 13 3 17" stroke="#555" fill="none"/></svg><svg class="a" style="left:1218px;top:88px" width="26" height="22"><rect x="2" y="2" width="21" height="15" fill="#fff" stroke="#222" stroke-width="2.5"/><rect x="9" y="18" width="8" height="2" fill="#222"/><path d="M7 15 L7 5 L11 5 L11 15 Z" fill="#3040a0"/><path d="M11 15 L15 5 L19 15 Z" fill="#d02020"/></svg><svg class="a" style="left:1248px;top:88px" width="24" height="22"><path d="M3 3 L20 3 L21 7 L15 7 L14 9 L9 9 L8 7 L3 6 Z" fill="#555" stroke="#222"/><rect x="9" y="9" width="5" height="12" fill="#a03028" stroke="#501010"/></svg>
<div class="a" style="left:1108px;top:119px;width:24px;height:24px;background:#f4c04a;border:1px solid #f8f8f8;border-right-color:#8a8a8a;border-bottom-color:#8a8a8a"></div>
<svg class="a" style="left:1111px;top:122px" width="18" height="18"><defs><radialGradient id="sph" cx="35%" cy="30%" r="70%"><stop offset="0" stop-color="#fff"/><stop offset=".45" stop-color="#9a9a9a"/><stop offset="1" stop-color="#202020"/></radialGradient></defs><circle cx="9" cy="9" r="7" fill="url(#sph)"/></svg>
<svg class="a" style="left:1136px;top:121px" width="20" height="20"><rect x="1" y="3" width="10" height="9" fill="#ddd" stroke="#777"/><path d="M9 9 L14 2 L18 12 Z" fill="#999" stroke="#333"/><circle cx="9" cy="14" r="4.5" fill="#fff" stroke="#222"/><circle cx="9" cy="14" r="1" fill="#222"/></svg><svg class="a" style="left:1160px;top:121px" width="20" height="20"><path d="M2 4 L6 2 L18 16 L14 18 Z" fill="#ffffa0" stroke="#333"/><path d="M3 3 L8 8" stroke="#333" stroke-width="2"/></svg><svg class="a" style="left:1184px;top:122px" width="20" height="18"><circle cx="5" cy="4" r="3" fill="#fff" stroke="#222" stroke-width="1.5"/><circle cx="12" cy="4" r="3" fill="#fff" stroke="#222" stroke-width="1.5"/><rect x="2" y="8" width="12" height="7" fill="#333"/><path d="M14 10 L18 8 L18 15 L14 13 Z" fill="#333"/></svg><svg class="a" style="left:1208px;top:123px" width="20" height="18"><rect x="1" y="2" width="13" height="11" fill="#eee" stroke="#666"/><circle cx="7.5" cy="7.5" r="3.5" fill="none" stroke="#888"/><path d="M15 13 L18 13" stroke="#555"/></svg><svg class="a" style="left:1232px;top:123px" width="20" height="18"><path d="M1 4 Q4 1 7 4 T13 4 T18 4 M1 9 Q4 6 7 9 T13 9 T18 9 M1 14 Q4 11 7 14 T13 14 T18 14" stroke="#3a4a9a" fill="none" stroke-width="1.3"/></svg><svg class="a" style="left:1255px;top:122px" width="20" height="20"><circle cx="6" cy="6" r="3.5" fill="none" stroke="#333" stroke-width="2.5" stroke-dasharray="1.5 1"/><circle cx="12" cy="12" r="4.5" fill="none" stroke="#333" stroke-width="3" stroke-dasharray="2 1.2"/></svg>
<div class="sunk" style="left:1108px;top:149px;width:162px;height:19px"></div>
<div class="t" style="left:1112px;top:152px;letter-spacing:-0.2px">Standard Primitives</div>
<div class="a" style="left:1253px;top:151px;width:16px;height:16px;background:#e8e8e8;border-right:1px solid #777;border-bottom:1px solid #777"></div>
<svg class="a" style="left:1256px;top:155px" width="10" height="8"><path d="M1 2 L9 2 L5 7 Z" fill="#000"/></svg>
<div class="a" style="left:1100px;top:176px;width:174px;height:1px;background:#8a8a8a"></div>
<div class="a" style="left:1100px;top:177px;width:174px;height:1px;background:#ececec"></div>
<div class="a" style="left:1104px;top:189px;width:165px;height:135px;border:1px solid #8c8c8c;border-right-color:#f0f0f0;border-bottom-color:#f0f0f0;box-shadow:inset -1px -1px 0 #8c8c8c, inset 1px 1px 0 #f0f0f0"></div>
<div class="a" style="left:1107px;top:181px;width:159px;height:16px;background:#b8b8b8;border:1px solid #1a1a1a"></div>
<div class="t" style="left:1112px;top:182px;font-size:11px">-</div>
<div class="t" style="left:1157px;top:182px;">Object Type</div>
<div class="a" style="left:1138px;top:200px;width:12px;height:12px;border:2px solid #808080;border-right:1px solid #f0f0f0;border-bottom:1px solid #f0f0f0;background:#c5c5c5"></div>
<div class="t" style="left:1161px;top:200px;color:#8a8a8a">AutoGrid</div>
<div class="btn" style="left:1113px;top:217px;width:69px;height:18px">Box</div>
<div class="btn" style="left:1191px;top:217px;width:69px;height:18px">Cone</div>
<div class="btn" style="left:1113px;top:238px;width:69px;height:18px">Sphere</div>
<div class="btn" style="left:1191px;top:238px;width:69px;height:18px">GeoSphere</div>
<div class="btn" style="left:1113px;top:259px;width:69px;height:18px">Cylinder</div>
<div class="btn" style="left:1191px;top:259px;width:69px;height:18px">Tube</div>
<div class="btn" style="left:1113px;top:280px;width:69px;height:18px">Torus</div>
<div class="btn" style="left:1191px;top:280px;width:69px;height:18px">Pyramid</div>
<div class="btn" style="left:1113px;top:301px;width:69px;height:18px">Teapot</div>
<div class="btn" style="left:1191px;top:301px;width:69px;height:18px">Plane</div>
<div class="a" style="left:1104px;top:338px;width:165px;height:43px;border:1px solid #8c8c8c;border-right-color:#f0f0f0;border-bottom-color:#f0f0f0;box-shadow:inset -1px -1px 0 #8c8c8c, inset 1px 1px 0 #f0f0f0"></div>
<div class="a" style="left:1107px;top:330px;width:159px;height:16px;background:#b8b8b8;border:1px solid #1a1a1a"></div>
<div class="t" style="left:1112px;top:331px;">-</div>
<div class="t" style="left:1147px;top:331px;">Name and Color</div>
<div class="sunkb" style="left:1112px;top:354px;width:131px;height:19px"></div>
<div class="a" style="left:1246px;top:354px;width:17px;height:18px;background:#8e0a38;border:1px solid #6a0020"></div>
<div class="a" style="left:0;top:899px;width:1096px;height:19px;background:#c5c5c5"></div><div class="btn" style="left:0px;top:900px;width:16px;height:17px"></div><svg class="a" style="left:0;top:900px" width="16" height="17"><path d="M8.5 5 L5 8.5 L8.5 12" stroke="#000" stroke-width="1.2" fill="none"/></svg><div class="a" style="left:16px;top:900px;width:125px;height:17px;background:#cfcfcf;border-top:1px solid #f4f4f4;border-left:1px solid #f4f4f4;border-right:2px solid #111;border-bottom:2px solid #111"></div><div class="t" style="left:16px;top:902px;width:125px;text-align:center;font-size:11px">0 / 100</div><div class="btn" style="left:141px;top:900px;width:16px;height:17px"></div><svg class="a" style="left:141px;top:900px" width="16" height="17"><path d="M6.5 5 L10 8.5 L6.5 12" stroke="#000" stroke-width="1.2" fill="none"/></svg><div class="a" style="left:0;top:917px;width:1096px;height:2px;background:#f0f0f0"></div><div class="a" style="left:0;top:919px;width:1096px;height:27px;background:#c5c5c5"></div><svg class="a" style="left:12px;top:923px" width="20" height="20"><rect x="1.5" y="1.5" width="16" height="5" fill="none" stroke="#000" stroke-width="1.4"/><path d="M4 4 C6 2 8 6 10 4 C12 2 13 5 15 4" stroke="#000" fill="none" stroke-width=".8"/><path d="M5 14 L5 9 M3 11 L5 9 L7 11 M14 9 L14 14 M12 12 L14 14 L16 12" stroke="#000" fill="none" stroke-width="1.2"/><rect x="1.5" y="15.5" width="16" height="3" fill="none" stroke="#000" stroke-width="1.4"/></svg><svg class="a" style="left:0;top:0" width="1096" height="946" shape-rendering="crispEdges"><rect x="54" y="920" width="1" height="11" fill="#6a6a6a"/><rect x="54" y="942" width="1" height="3" fill="#777"/><rect x="64" y="920" width="1" height="11" fill="#6a6a6a"/><rect x="74" y="920" width="1" height="11" fill="#6a6a6a"/><rect x="83" y="920" width="1" height="11" fill="#6a6a6a"/><rect x="93" y="920" width="1" height="11" fill="#6a6a6a"/><rect x="103" y="920" width="1" height="11" fill="#6a6a6a"/><rect x="103" y="942" width="1" height="3" fill="#777"/><rect x="113" y="920" width="1" height="11" fill="#6a6a6a"/><rect x="123" y="920" width="1" height="11" fill="#6a6a6a"/><rect x="133" y="920" width="1" height="11" fill="#6a6a6a"/><rect x="143" y="920" width="1" height="11" fill="#6a6a6a"/><rect x="153" y="920" width="1" height="11" fill="#6a6a6a"/><rect x="153" y="942" width="1" height="3" fill="#777"/><rect x="163" y="920" width="1" height="11" fill="#6a6a6a"/><rect x="172" y="920" width="1" height="11" fill="#6a6a6a"/><rect x="182" y="920" width="1" height="11" fill="#6a6a6a"/><rect x="192" y="920" width="1" height="11" fill="#6a6a6a"/><rect x="202" y="920" width="1" height="11" fill="#6a6a6a"/><rect x="202" y="942" width="1" height="3" fill="#777"/><rect x="212" y="920" width="1" height="11" fill="#6a6a6a"/><rect x="222" y="920" width="1" height="11" fill="#6a6a6a"/><rect x="232" y="920" width="1" height="11" fill="#6a6a6a"/><rect x="242" y="920" width="1" height="11" fill="#6a6a6a"/><rect x="252" y="920" width="1" height="11" fill="#6a6a6a"/><rect x="252" y="942" width="1" height="3" fill="#777"/><rect x="261" y="920" width="1" height="11" fill="#6a6a6a"/><rect x="271" y="920" width="1" height="11" fill="#6a6a6a"/><rect x="281" y="920" width="1" height="11" fill="#6a6a6a"/><rect x="291" y="920" width="1" height="11" fill="#6a6a6a"/><rect x="301" y="920" width="1" height="11" fill="#6a6a6a"/><rect x="301" y="942" width="1" height="3" fill="#777"/><rect x="311" y="920" width="1" height="11" fill="#6a6a6a"/><rect x="321" y="920" width="1" height="11" fill="#6a6a6a"/><rect x="331" y="920" width="1" height="11" fill="#6a6a6a"/><rect x="341" y="920" width="1" height="11" fill="#6a6a6a"/><rect x="351" y="920" width="1" height="11" fill="#6a6a6a"/><rect x="351" y="942" width="1" height="3" fill="#777"/><rect x="360" y="920" width="1" height="11" fill="#6a6a6a"/><rect x="370" y="920" width="1" height="11" fill="#6a6a6a"/><rect x="380" y="920" width="1" height="11" fill="#6a6a6a"/><rect x="390" y="920" width="1" height="11" fill="#6a6a6a"/><rect x="400" y="920" width="1" height="11" fill="#6a6a6a"/><rect x="400" y="942" width="1" height="3" fill="#777"/><rect x="410" y="920" width="1" height="11" fill="#6a6a6a"/><rect x="420" y="920" width="1" height="11" fill="#6a6a6a"/><rect x="430" y="920" width="1" height="11" fill="#6a6a6a"/><rect x="440" y="920" width="1" height="11" fill="#6a6a6a"/><rect x="449" y="920" width="1" height="11" fill="#6a6a6a"/><rect x="449" y="942" width="1" height="3" fill="#777"/><rect x="459" y="920" width="1" height="11" fill="#6a6a6a"/><rect x="469" y="920" width="1" height="11" fill="#6a6a6a"/><rect x="479" y="920" width="1" height="11" fill="#6a6a6a"/><rect x="489" y="920" width="1" height="11" fill="#6a6a6a"/><rect x="499" y="920" width="1" height="11" fill="#6a6a6a"/><rect x="499" y="942" width="1" height="3" fill="#777"/><rect x="509" y="920" width="1" height="11" fill="#6a6a6a"/><rect x="519" y="920" width="1" height="11" fill="#6a6a6a"/><rect x="529" y="920" width="1" height="11" fill="#6a6a6a"/><rect x="538" y="920" width="1" height="11" fill="#6a6a6a"/><rect x="548" y="920" width="1" height="11" fill="#6a6a6a"/><rect x="548" y="942" width="1" height="3" fill="#777"/><rect x="558" y="920" width="1" height="11" fill="#6a6a6a"/><rect x="568" y="920" width="1" height="11" fill="#6a6a6a"/><rect x="578" y="920" width="1" height="11" fill="#6a6a6a"/><rect x="588" y="920" width="1" height="11" fill="#6a6a6a"/><rect x="598" y="920" width="1" height="11" fill="#6a6a6a"/><rect x="598" y="942" width="1" height="3" fill="#777"/><rect x="608" y="920" width="1" height="11" fill="#6a6a6a"/><rect x="618" y="920" width="1" height="11" fill="#6a6a6a"/><rect x="627" y="920" width="1" height="11" fill="#6a6a6a"/><rect x="637" y="920" width="1" height="11" fill="#6a6a6a"/><rect x="647" y="920" width="1" height="11" fill="#6a6a6a"/><rect x="647" y="942" width="1" height="3" fill="#777"/><rect x="657" y="920" width="1" height="11" fill="#6a6a6a"/><rect x="667" y="920" width="1" height="11" fill="#6a6a6a"/><rect x="677" y="920" width="1" height="11" fill="#6a6a6a"/><rect x="687" y="920" width="1" height="11" fill="#6a6a6a"/><rect x="697" y="920" width="1" height="11" fill="#6a6a6a"/><rect x="697" y="942" width="1" height="3" fill="#777"/><rect x="707" y="920" width="1" height="11" fill="#6a6a6a"/><rect x="716" y="920" width="1" height="11" fill="#6a6a6a"/><rect x="726" y="920" width="1" height="11" fill="#6a6a6a"/><rect x="736" y="920" width="1" height="11" fill="#6a6a6a"/><rect x="746" y="920" width="1" height="11" fill="#6a6a6a"/><rect x="746" y="942" width="1" height="3" fill="#777"/><rect x="756" y="920" width="1" height="11" fill="#6a6a6a"/><rect x="766" y="920" width="1" height="11" fill="#6a6a6a"/><rect x="776" y="920" width="1" height="11" fill="#6a6a6a"/><rect x="786" y="920" width="1" height="11" fill="#6a6a6a"/><rect x="796" y="920" width="1" height="11" fill="#6a6a6a"/><rect x="796" y="942" width="1" height="3" fill="#777"/><rect x="805" y="920" width="1" height="11" fill="#6a6a6a"/><rect x="815" y="920" width="1" height="11" fill="#6a6a6a"/><rect x="825" y="920" width="1" height="11" fill="#6a6a6a"/><rect x="835" y="920" width="1" height="11" fill="#6a6a6a"/><rect x="845" y="920" width="1" height="11" fill="#6a6a6a"/><rect x="845" y="942" width="1" height="3" fill="#777"/><rect x="855" y="920" width="1" height="11" fill="#6a6a6a"/><rect x="865" y="920" width="1" height="11" fill="#6a6a6a"/><rect x="875" y="920" width="1" height="11" fill="#6a6a6a"/><rect x="885" y="920" width="1" height="11" fill="#6a6a6a"/><rect x="894" y="920" width="1" height="11" fill="#6a6a6a"/><rect x="894" y="942" width="1" height="3" fill="#777"/><rect x="904" y="920" width="1" height="11" fill="#6a6a6a"/><rect x="914" y="920" width="1" height="11" fill="#6a6a6a"/><rect x="924" y="920" width="1" height="11" fill="#6a6a6a"/><rect x="934" y="920" width="1" height="11" fill="#6a6a6a"/><rect x="944" y="920" width="1" height="11" fill="#6a6a6a"/><rect x="944" y="942" width="1" height="3" fill="#777"/><rect x="954" y="920" width="1" height="11" fill="#6a6a6a"/><rect x="964" y="920" width="1" height="11" fill="#6a6a6a"/><rect x="974" y="920" width="1" height="11" fill="#6a6a6a"/><rect x="983" y="920" width="1" height="11" fill="#6a6a6a"/><rect x="993" y="920" width="1" height="11" fill="#6a6a6a"/><rect x="993" y="942" width="1" height="3" fill="#777"/><rect x="1003" y="920" width="1" height="11" fill="#6a6a6a"/><rect x="1013" y="920" width="1" height="11" fill="#6a6a6a"/><rect x="1023" y="920" width="1" height="11" fill="#6a6a6a"/><rect x="1033" y="920" width="1" height="11" fill="#6a6a6a"/><rect x="1043" y="920" width="1" height="11" fill="#6a6a6a"/><rect x="1043" y="942" width="1" height="3" fill="#777"/></svg><div class="a" style="left:50px;top:920px;width:9px;height:25px;background:#a8c6de;border:1px solid #7a9ab8"></div><div class="a" style="left:54px;top:921px;width:1px;height:11px;background:#5a7a9a"></div><div class="t" style="left:51.4px;top:931px;font-size:11px">0</div><div class="t" style="left:100.4px;top:931px;font-size:11px">5</div><div class="t" style="left:147.3px;top:931px;font-size:11px">10</div><div class="t" style="left:196.3px;top:931px;font-size:11px">15</div><div class="t" style="left:246.3px;top:931px;font-size:11px">20</div><div class="t" style="left:295.3px;top:931px;font-size:11px">25</div><div class="t" style="left:345.3px;top:931px;font-size:11px">30</div><div class="t" style="left:394.3px;top:931px;font-size:11px">35</div><div class="t" style="left:443.3px;top:931px;font-size:11px">40</div><div class="t" style="left:493.3px;top:931px;font-size:11px">45</div><div class="t" style="left:542.3px;top:931px;font-size:11px">50</div><div class="t" style="left:592.3px;top:931px;font-size:11px">55</div><div class="t" style="left:641.3px;top:931px;font-size:11px">60</div><div class="t" style="left:691.3px;top:931px;font-size:11px">65</div><div class="t" style="left:740.3px;top:931px;font-size:11px">70</div><div class="t" style="left:790.3px;top:931px;font-size:11px">75</div><div class="t" style="left:839.3px;top:931px;font-size:11px">80</div><div class="t" style="left:888.3px;top:931px;font-size:11px">85</div><div class="t" style="left:938.3px;top:931px;font-size:11px">90</div><div class="t" style="left:987.3px;top:931px;font-size:11px">95</div><div class="t" style="left:1034.2px;top:931px;font-size:11px">100</div><div class="a" style="left:0;top:945px;width:1096px;height:1px;background:#f0f0f0"></div><div class="a" style="left:0;top:946px;width:1280px;height:2px;background:#8a8a8a"></div><div class="a" style="left:0;top:948px;width:1280px;height:47px;background:#c5c5c5"></div><div class="a" style="left:2px;top:948px;width:96px;height:21px;background:#dcc4c4;border-top:1px solid #777;border-left:1px solid #777;border-right:1px solid #f0f0f0;border-bottom:1px solid #f0f0f0"></div><div class="a" style="left:2px;top:971px;width:96px;height:22px;background:#fff;border-top:1px solid #777;border-left:1px solid #777;border-right:1px solid #f0f0f0;border-bottom:1px solid #f0f0f0"></div><div class="sep" style="left:103px;top:948px;height:47px"></div><div class="pnl" style="left:107px;top:949px;width:328px;height:20px"></div><div class="t" style="left:113px;top:953px">None Selected</div><div class="pnl" style="left:107px;top:974px;width:604px;height:20px"></div><div class="t" style="left:113px;top:978px">Click and drag to select and move objects</div><svg class="a" style="left:442px;top:951px" width="12" height="15"><path d="M3 7 L3 4 A3 3 0 0 1 9 4 L9 5" stroke="#000" stroke-width="1.6" fill="none"/><rect x="2" y="7" width="8" height="6" fill="#000"/><path d="M2 9 L10 9 M2 11 L10 11" stroke="#ccc" stroke-width=".7"/></svg><svg class="a" style="left:467px;top:950px" width="18" height="18"><rect x="1.5" y="1.5" width="14" height="14" fill="none" stroke="#000" stroke-width="1.3"/><path d="M8.5 2 L8.5 15 M2 8.5 L15 8.5" stroke="#000" stroke-width=".7"/><circle cx="8.5" cy="8.5" r="2.2" fill="#000"/></svg><div class="t" style="left:490px;top:953px;font-size:12px">X:</div><div class="sunkb" style="left:502px;top:949px;width:57px;height:20px"></div><div class="t" style="left:572px;top:953px;font-size:12px">Y:</div><div class="sunkb" style="left:584px;top:949px;width:57px;height:20px"></div><div class="t" style="left:655px;top:953px;font-size:12px">Z:</div><div class="sunkb" style="left:665px;top:949px;width:57px;height:20px"></div><div class="sep" style="left:712px;top:975px;height:19px"></div><svg class="a" style="left:716px;top:974px" width="14" height="18"><circle cx="7" cy="7" r="5" fill="#e8e8e8" stroke="#aaa"/><path d="M4 16 L10 16 M7 12 L7 16" stroke="#aaa" stroke-width="1.5"/></svg><div class="pnl" style="left:737px;top:949px;width:100px;height:20px"></div><div class="t" style="left:742px;top:953px">Grid = 10,0</div><div class="pnl" style="left:737px;top:974px;width:100px;height:20px"></div><div class="t" style="left:742px;top:978px">Add Time Tag</div><div class="btn" style="left:839px;top:948px;width:43px;height:45px"></div><svg class="a" style="left:846px;top:962px" width="28" height="14"><circle cx="6" cy="7" r="4.2" fill="none" stroke="#000" stroke-width="2.5"/><path d="M10 7 L25 7 M19 7 L19 11 M23 7 L23 11" stroke="#000" stroke-width="2.6"/></svg><div class="sep" style="left:883px;top:948px;height:47px"></div><div class="btn" style="left:886px;top:948px;width:47px;height:22px;line-height:20px">Auto Key</div><div class="btn" style="left:886px;top:970px;width:47px;height:22px;line-height:20px">Set Key</div><div class="sunk" style="left:936px;top:948px;width:114px;height:21px"></div><div class="t" style="left:940px;top:952px">Selected</div><div class="a" style="left:1033px;top:950px;width:16px;height:18px;background:#e8e8e8;border-right:1px solid #777;border-bottom:1px solid #777"></div><svg class="a" style="left:1036px;top:955px" width="10" height="8"><path d="M1 1 L9 1 L5 6 Z" fill="#000"/></svg><div class="a" style="left:936px;top:971px;width:23px;height:21px;background:#c4c4cc"></div><svg class="a" style="left:939px;top:973px" width="18" height="18"><path d="M2 14 L6 4 L10 14 L14 4" stroke="#a83040" stroke-width="1.3" fill="none"/><path d="M2 4 L16 4 M2 14 L16 14" stroke="#8878a8" stroke-width=".6"/><path d="M18 18 L18 14 L14 18 Z" fill="#000"/></svg><div class="btn" style="left:963px;top:972px;width:89px;height:20px;line-height:18px">Key Filters...</div><svg class="a" style="left:1056px;top:948px" width="224" height="47"><rect x="4" y="6" width="2" height="10" fill="#000"/><path d="M6 11 L12 6 L12 16 Z M12 11 L18 6 L18 16 Z" fill="#000"/><rect x="26" y="4" width="1" height="14" fill="#888"/><path d="M32 11 L38 6 L38 16 Z" fill="#000"/><rect x="39" y="7" width="2" height="8" fill="#000"/><rect x="42" y="7" width="2" height="8" fill="#000"/><rect x="53.5" y="3.5" width="16" height="15" fill="none" stroke="#000" stroke-width="2"/><path d="M58 6.5 L66 11 L58 15.5 Z" fill="#000"/><path d="M73 19 L73 15 L69 19 Z" fill="#000"/><rect x="76" y="7" width="2" height="8" fill="#000"/><rect x="79" y="7" width="2" height="8" fill="#000"/><path d="M82 6 L88 11 L82 16 Z" fill="#000"/><rect x="97" y="4" width="1" height="14" fill="#888"/><path d="M102 6 L108 11 L102 16 Z M108 6 L114 11 L108 16 Z" fill="#000"/><rect x="114" y="6" width="2" height="10" fill="#000"/><rect x="127" y="4" width="1" height="14" fill="#888"/><rect x="7" y="29" width="1.5" height="9" fill="#000"/><rect x="16" y="29" width="1.5" height="9" fill="#000"/><path d="M8 33.5 L12 30 L12 37 Z M16 33.5 L12 30 L12 37 Z" fill="#000"/><rect x="26" y="25" width="1" height="18" fill="#888"/><rect x="92.5" y="24" width="9" height="19" fill="#ddd" stroke="#999"/><path d="M94 30 L97 26 L100 30 Z M94 36 L97 40 L100 36 Z" fill="#000"/><rect x="104" y="24" width="1" height="19" fill="#888"/><rect x="107.5" y="25.5" width="13" height="12" fill="#e8e8e8" stroke="#000"/><rect x="107.5" y="25.5" width="13" height="3" fill="#333"/><circle cx="117" cy="36" r="5" fill="#f8e0e0" stroke="#a02020"/><path d="M117 33 L117 36 L119 37" stroke="#a02020" fill="none"/><rect x="127" y="25" width="1" height="18" fill="#888"/><circle cx="139" cy="9" r="5" fill="#e8eef8" stroke="#222" stroke-width="1.5"/><path d="M142.5 12.5 L147 17" stroke="#2a3a8a" stroke-width="2.5"/><rect x="162.5" y="2.5" width="14" height="10" fill="none" stroke="#b03030"/><path d="M169.5 2.5 L169.5 12.5 M162.5 7.5 L176.5 7.5" stroke="#b03030"/><circle cx="161" cy="12" r="4.5" fill="#e8eef8" stroke="#222" stroke-width="1.3"/><path d="M164 15 L168 19" stroke="#2a3a8a" stroke-width="2.2"/><path d="M178 5 L178 2 L181 2 M191 2 L194 2 L194 5 M194 15 L194 18 L191 18 M181 18 L178 18 L178 15" stroke="#000" stroke-width="1.5" fill="none"/><path d="M181 8 L185 5 L192 5 L192 13 L188 16 L181 16 Z" fill="#c8ccec" stroke="#222"/><path d="M181 8 L188 8 L192 5 M188 8 L188 16" stroke="#222" fill="none"/><path d="M198 19 L198 16 L195 19 Z" fill="#000"/><rect x="208.5" y="1.5" width="10" height="9" fill="none" stroke="#b03030"/><path d="M213.5 1.5 L213.5 10.5 M208.5 6 L218.5 6" stroke="#b03030"/><path d="M200 10 L204 7 L211 7 L211 15 L207 18 L200 18 Z" fill="#c8ccec" stroke="#222"/><path d="M220 19 L220 16 L217 19 Z" fill="#000"/><rect x="132.5" y="25.5" width="15" height="15" fill="none" stroke="#000" stroke-dasharray="2 1.3" stroke-width="1.3"/><circle cx="139" cy="32" r="3.8" fill="#e8eef8" stroke="#222" stroke-width="1.3"/><path d="M142 35 L145.5 38.5" stroke="#2a3a8a" stroke-width="2"/><path d="M158 42 C154 38 155 34 155 31 L157 30 L159 34 L158 26 L160 25 L162 32 L162 24 L164 24 L165 32 L166 25 L168 25 L168 33 L170 29 L172 30 L169 38 C168 41 165 42 158 42 Z" fill="#fff" stroke="#000" stroke-width="1"/><circle cx="186" cy="35" r="6" fill="none" stroke="#000" stroke-width="1.2"/><path d="M186 24 L186 35 L178 40 M186 35 L194 35" stroke="#000" stroke-width="1.2" fill="none"/><path d="M184 27 L186 23 L188 27 Z M193 33 L196 35 L193 37 Z" fill="#000"/><path d="M198 43 L198 40 L195 43 Z" fill="#000"/><rect x="201.5" y="25.5" width="13" height="12" fill="#c8ccec" stroke="#222" stroke-width="1.3"/><rect x="208.5" y="31.5" width="10" height="10" fill="none" stroke="#222" stroke-width="1.3"/><path d="M204 28 L210 34 M204 28 L204 31 M204 28 L207 28" stroke="#222" stroke-width="1"/></svg><div class="sunkb" style="left:1084px;top:972px;width:63px;height:20px"></div><div class="t" style="left:1089px;top:976px">0</div>
<div class="a" style="left:0;top:995px;width:1280px;height:29px;background:linear-gradient(#0a0a0a 0px,#0a0a0a 1px,#7c7c7c 1px,#444 14px,#0e0e0e 15px,#0e0e0e 100%)"></div><div class="a" style="left:11px;top:996px;width:36px;height:36px;border-radius:50%;background:radial-gradient(circle at 50% 30%,#9ad4f0 0%,#3a8ac0 35%,#10406a 70%,#0a2a4a 100%);box-shadow:0 0 0 1px #111"></div><svg class="a" style="left:17px;top:1000px" width="24" height="24"><path d="M3 6 C6 4 8 5 11 6 L10 11 C7 10 5 10 2 11 Z" fill="#f05a28"/><path d="M12 6 C15 7 17 7 20 5 L19 10 C16 11 14 11 11 11 Z" fill="#7cc42a"/><path d="M2 12 C5 11 7 11 10 12 L9 17 C6 16 4 16 1 17 Z" fill="#1a9ae0"/><path d="M11 12 C14 13 16 13 19 11 L18 16 C15 17 13 17 10 17 Z" fill="#f8c21a"/></svg><div class="a" style="left:56px;top:997px;width:156px;height:26px;border-radius:3px;border:1px solid #3a3a3a;background:linear-gradient(#8a8a8a 0%,#4a4a4a 50%,#151515 52%,#1c1c1c 100%);box-shadow:inset 0 0 0 1px rgba(255,255,255,.15)"></div><svg class="a" style="left:64px;top:1002px" width="18" height="18"><path d="M3 13 L11 3 L15 6 L7 16 Z" fill="#f0b040" stroke="#805010"/><path d="M5 10 L12 12 M7 7 L13 9" stroke="#805010"/></svg><div class="t" style="left:84px;top:1003px;font-size:11.5px;line-height:14px;color:#eee">44. Pain - Shut Your M...</div><div class="a" style="left:216px;top:997px;width:154px;height:26px;border-radius:3px;border:1px solid #3a3a3a;background:linear-gradient(#8a8a8a 0%,#4a4a4a 50%,#151515 52%,#1c1c1c 100%);box-shadow:inset 0 0 0 1px rgba(255,255,255,.15)"></div><div class="a" style="left:224px;top:1002px;width:15px;height:15px;background:#2a9a8e;border:1px solid #7cd;border-radius:2px"><div class="a" style="left:2px;top:2px;width:9px;height:9px;border:2px solid #eff;border-radius:50%"></div></div><div class="t" style="left:244px;top:1003px;font-size:11.5px;line-height:14px;color:#eee">Untitled&nbsp;&nbsp;&nbsp;&nbsp;&nbsp; - Project F...</div><div class="a" style="left:376px;top:997px;width:156px;height:26px;border-radius:3px;border:1px solid #3a3a3a;background:linear-gradient(#8a8a8a 0%,#4a4a4a 50%,#151515 52%,#1c1c1c 100%);box-shadow:inset 0 0 0 1px rgba(255,255,255,.15)"></div><svg class="a" style="left:384px;top:1002px" width="18" height="18"><ellipse cx="9" cy="9" rx="6" ry="7" fill="none" stroke="#d01818" stroke-width="3"/></svg><div class="t" style="left:404px;top:1003px;font-size:11.5px;line-height:14px;color:#eee">.:3DCenter.ru:. Библ...</div><div class="a" style="left:1131px;top:1001px;width:19px;height:17px;background:#3a7ad8"></div><div class="t" style="left:1133px;top:1003px;font-size:11px;color:#fff">RU</div><div class="t" style="left:1164px;top:1002px;font-size:13px;color:#ddd;font-weight:bold">&lt;</div><svg class="a" style="left:1179px;top:1001px" width="70" height="20"><rect x="1" y="6" width="8" height="8" fill="#3a8ae0" stroke="#fff"/><rect x="5" y="2" width="8" height="8" fill="#3a8ae0" stroke="#fff"/><path d="M3 16 L11 16" stroke="#fff"/><rect x="22" y="2" width="12" height="15" fill="#207a40"/><path d="M24 15 L24 4 L32 15 L32 4" stroke="#8f8" stroke-width="1.5" fill="none"/><ellipse cx="44" cy="10" rx="5" ry="8" fill="#ccc"/><path d="M42 6 L46 13 L44 15 L44 5 L46 7 L42 13" stroke="#555" fill="none"/></svg><div class="t" style="left:1239px;top:1003px;font-size:12px;color:#fff">23:05</div>
</body></html>
